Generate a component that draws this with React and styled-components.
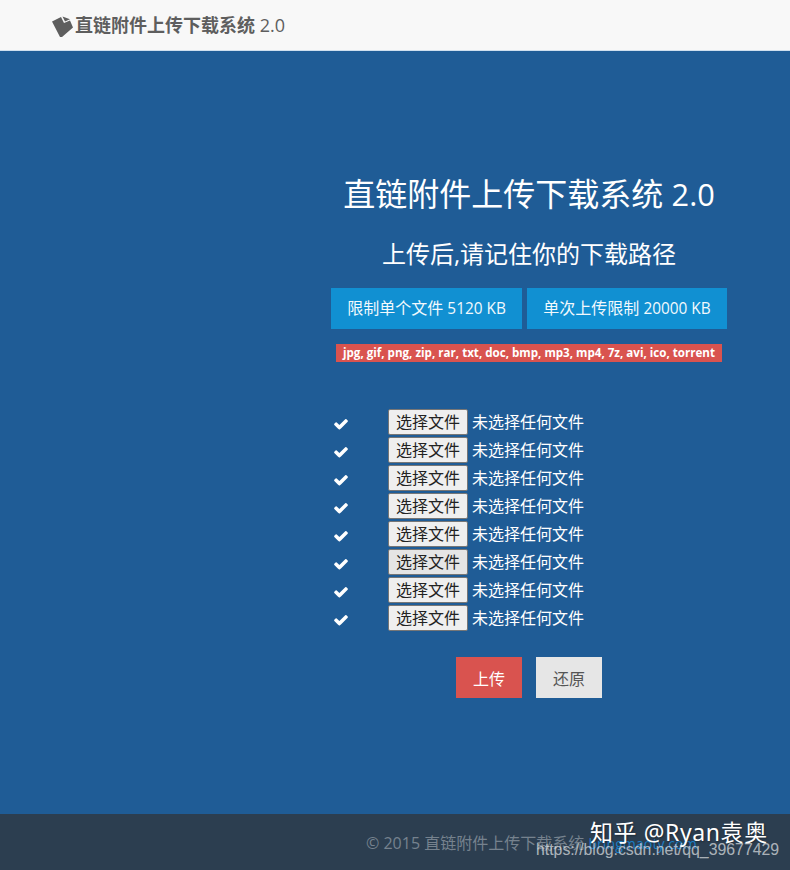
import React from "react";
import styled, { createGlobalStyle } from "styled-components";

const cjk = `"Open Sans", "Noto Sans CJK SC", sans-serif`;

const Global = createGlobalStyle`
  html, body { margin: 0; padding: 0; background: #1f5c96; }
  body { font-family: ${cjk}; width: 790px; height: 870px; overflow: hidden; }
`;

const Page = styled.div`
  display: flex;
  flex-direction: column;
  height: 870px;
`;

const Navbar = styled.header`
  height: 50px;
  flex: none;
  background: #f8f8f8;
  border-bottom: 1px solid #cfdfee;
  display: flex;
  align-items: center;
  padding: 0 0 0 51px;
  color: #5e5e5e;
`;

const Brand = styled.span`
  font-size: 18px;
  font-weight: 700;
  line-height: 50px;
  color: #5e5e5e;
`;

const BrandVersion = styled.span`
  font-weight: 400;
`;

const Num = styled.span`
  font-size: 0.96em;
`;

const Main = styled.main`
  flex: 1;
  background: #1f5c96;
  padding: 122px 0 0 268px;
  display: flex;
  flex-direction: column;
  align-items: center;
  color: #fff;
`;

const Title = styled.h1`
  margin: 0;
  font-size: 32px;
  line-height: 42px;
  font-weight: 400;
`;

const Subtitle = styled.h2`
  margin: 21px 0 0;
  font-size: 24px;
  line-height: 36px;
  font-weight: 400;
`;

const Limits = styled.div`
  display: flex;
  gap: 5px;
  margin-top: 16px;
`;

const Limit = styled.div`
  height: 41px;
  width: ${(p) => p.$width}px;
  box-sizing: border-box;
  text-align: center;
  background: #1190d2;
  font-size: 16px;
  line-height: 41px;
  color: #f2f9fd;
  white-space: nowrap;
`;

const Types = styled.div`
  margin-top: 15px;
  height: 18px;
  width: 386px;
  box-sizing: border-box;
  background: #d9534f;
  font-size: 11.6px;
  line-height: 18px;
  font-weight: 700;
  text-align: center;
  white-space: nowrap;
`;

const Files = styled.div`
  margin-top: 46px;
  width: 396px;
  display: flex;
  flex-direction: column;
`;

const FileRow = styled.div`
  height: 28px;
  display: flex;
  align-items: center;
  padding-left: 2px;
`;

const Tick = styled.svg`
  width: 16px;
  height: 16px;
  flex: none;
  margin-top: 3px;
`;

const Logo = styled.svg`
  width: 24px;
  height: 24px;
  flex: none;
`;

const Pick = styled.button`
  margin: 0 0 0 39px;
  width: 80px;
  height: 26px;
  padding: 0;
  box-sizing: border-box;
  border: 1px solid #767676;
  border-radius: 2px;
  background: ${(p) => (p.$hover ? "#e5e5e5" : "#efefef")};
  color: #222;
  font-family: ${cjk};
  font-size: 16px;
  line-height: 22px;
`;

const Chosen = styled.span`
  margin: -2px 0 0 4px;
  font-size: 16px;
  color: #fff;
  white-space: nowrap;
`;

const Actions = styled.div`
  display: flex;
  gap: 14px;
  margin: 25px 0 0;
`;

const Action = styled.button`
  width: 66px;
  height: 41px;
  padding: 0;
  border: 0;
  background: ${(p) => (p.$primary ? "#d9534f" : "#e6e6e6")};
  color: ${(p) => (p.$primary ? "#fff" : "#555")};
  font-family: ${cjk};
  font-size: 16px;
`;

const Footer = styled.footer`
  position: relative;
  height: 56px;
  flex: none;
  background: #2c3e50;
  padding: 17px 0 0 366px;
  box-sizing: border-box;
  font-size: 16px;
  line-height: 24px;
  color: #76828e;
  white-space: nowrap;
`;

const FooterLink = styled.a`
  color: #1a7dc4;
  font-size: 14.2px;
`;

const Watermark = styled.div`
  position: absolute;
  left: 590px;
  top: 1px;
  font-family: "Noto Sans", "Noto Sans CJK SC", sans-serif;
  font-size: 23px;
  line-height: 34px;
  color: #fff;
  letter-spacing: 0.6px;
  text-shadow: 1px 1px 2px rgba(0, 0, 0, 0.35);
`;

const Url = styled.div`
  position: absolute;
  left: 536px;
  top: 25px;
  font-family: "Liberation Sans", sans-serif;
  font-size: 15.85px;
  line-height: 22px;
  color: rgba(255, 255, 255, 0.62);
`;

const LogoIcon = () => (
  <Logo viewBox="0 0 24 24" aria-hidden="true">
    <path fill="#5e5e5e" d="M1 8.5 L10 4 L13 10 L19 7.5 L22 14.5 L11 24 L9 24 Z" />
    <path fill="#5e5e5e" d="M11.5 3.6 L19 6.2 L14 8.5 Z" />
  </Logo>
);

const CheckIcon = () => (
  <Tick viewBox="0 0 1792 1792" aria-hidden="true">
    <path
      fill="#fff"
      d="M1671 566q0 40-28 68l-724 724-136 136q-28 28-68 28t-68-28l-136-136-362-362q-28-28-28-68t28-68l136-136q28-28 68-28t68 28l294 295 656-657q28-28 68-28t68 28l136 136q28 28 28 68z"
    />
  </Tick>
);

export default function App() {
  const rows = Array.from({ length: 8 }, (_, i) => i);
  return (
    <Page>
      <Global />
      <Navbar>
        <LogoIcon />
        <Brand>直链附件上传下载系统 <BrandVersion>2.0</BrandVersion></Brand>
      </Navbar>
      <Main>
        <Title>直链附件上传下载系统 <Num>2.0</Num></Title>
        <Subtitle>上传后,请记住你的下载路径</Subtitle>
        <Limits>
          <Limit $width={191}>限制单个文件 <Num>5120 KB</Num></Limit>
          <Limit $width={200}>单次上传限制 <Num>20000 KB</Num></Limit>
        </Limits>
        <Types>jpg, gif, png, zip, rar, txt, doc, bmp, mp3, mp4, 7z, avi, ico, torrent</Types>
        <Files>
          {rows.map((i) => (
            <FileRow key={i}>
              <CheckIcon />
              <Pick type="button" $hover={i === 5}>选择文件</Pick>
              <Chosen>未选择任何文件</Chosen>
            </FileRow>
          ))}
        </Files>
        <Actions>
          <Action type="button" $primary>上传</Action>
          <Action type="button">还原</Action>
        </Actions>
      </Main>
      <Footer>
        © 2015 直链附件上传下载系统 <FooterLink>bringmaoty.com</FooterLink>
        <Watermark>知乎 @Ryan袁奥</Watermark>
        <Url>https://blog.csdn.net/qq_39677429</Url>
      </Footer>
    </Page>
  );
}
